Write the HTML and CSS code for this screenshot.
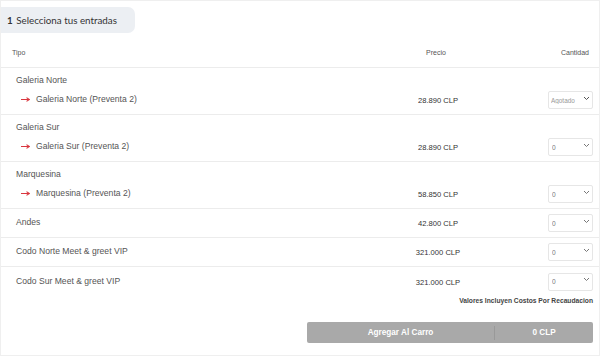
FILE: index.html
```html
<!DOCTYPE html>
<html lang="en">
<head>
    <meta charset="UTF-8">
    <meta name="viewport" content="width=device-width, initial-scale=1.0">
    <title>Selecciona tus entradas</title>
    <link rel="stylesheet" href="styles.css">
</head>
<body>
    <div class="card">
        <div class="step-tab"><span class="step-num">1</span> Selecciona tus entradas</div>

        <!-- Table header -->
        <div class="row head">
            <span class="col-name">Tipo</span>
            <span class="col-price">Precio</span>
            <span class="col-qty">Cantidad</span>
        </div>

        <div class="group">
            <div class="group-title">Galeria Norte</div>
            <div class="row sub">
                <span class="col-name"><svg class="arrow" width="9" height="5" viewBox="0 0 9 5"><path d="M0 2.5H7.5M5.5 0.6L8.4 2.5L5.5 4.4" fill="none" stroke="#d9363e" stroke-width="1.1"/></svg>Galeria Norte (Preventa 2)</span>
                <span class="col-price">28.890 CLP</span>
                <span class="col-qty">
                    <span class="select-wrap">
                        <select class="qty-select muted" disabled><option>Agotado</option></select>
                        <svg class="chev" width="7" height="5" viewBox="0 0 7 5"><path d="M1 1L3.5 3.5L6 1" fill="none" stroke="#555" stroke-width="1"/></svg>
                    </span>
                </span>
            </div>
        </div>

        <div class="group">
            <div class="group-title">Galeria Sur</div>
            <div class="row sub">
                <span class="col-name"><svg class="arrow" width="9" height="5" viewBox="0 0 9 5"><path d="M0 2.5H7.5M5.5 0.6L8.4 2.5L5.5 4.4" fill="none" stroke="#d9363e" stroke-width="1.1"/></svg>Galeria Sur (Preventa 2)</span>
                <span class="col-price">28.890 CLP</span>
                <span class="col-qty">
                    <span class="select-wrap">
                        <select class="qty-select"><option>0</option><option>1</option><option>2</option></select>
                        <svg class="chev" width="7" height="5" viewBox="0 0 7 5"><path d="M1 1L3.5 3.5L6 1" fill="none" stroke="#777" stroke-width="1"/></svg>
                    </span>
                </span>
            </div>
        </div>

        <div class="group">
            <div class="group-title">Marquesina</div>
            <div class="row sub">
                <span class="col-name"><svg class="arrow" width="9" height="5" viewBox="0 0 9 5"><path d="M0 2.5H7.5M5.5 0.6L8.4 2.5L5.5 4.4" fill="none" stroke="#d9363e" stroke-width="1.1"/></svg>Marquesina (Preventa 2)</span>
                <span class="col-price">58.850 CLP</span>
                <span class="col-qty">
                    <span class="select-wrap">
                        <select class="qty-select"><option>0</option><option>1</option><option>2</option></select>
                        <svg class="chev" width="7" height="5" viewBox="0 0 7 5"><path d="M1 1L3.5 3.5L6 1" fill="none" stroke="#777" stroke-width="1"/></svg>
                    </span>
                </span>
            </div>
        </div>

        <div class="row single">
            <span class="col-name">Andes</span>
            <span class="col-price">42.800 CLP</span>
            <span class="col-qty">
                <span class="select-wrap">
                    <select class="qty-select"><option>0</option><option>1</option><option>2</option></select>
                    <svg class="chev" width="7" height="5" viewBox="0 0 7 5"><path d="M1 1L3.5 3.5L6 1" fill="none" stroke="#777" stroke-width="1"/></svg>
                </span>
            </span>
        </div>

        <div class="row single">
            <span class="col-name">Codo Norte Meet &amp; greet VIP</span>
            <span class="col-price">321.000 CLP</span>
            <span class="col-qty">
                <span class="select-wrap">
                    <select class="qty-select"><option>0</option><option>1</option><option>2</option></select>
                    <svg class="chev" width="7" height="5" viewBox="0 0 7 5"><path d="M1 1L3.5 3.5L6 1" fill="none" stroke="#777" stroke-width="1"/></svg>
                </span>
            </span>
        </div>

        <div class="row single last">
            <span class="col-name">Codo Sur Meet &amp; greet VIP</span>
            <span class="col-price">321.000 CLP</span>
            <span class="col-qty">
                <span class="select-wrap">
                    <select class="qty-select"><option>0</option><option>1</option><option>2</option></select>
                    <svg class="chev" width="7" height="5" viewBox="0 0 7 5"><path d="M1 1L3.5 3.5L6 1" fill="none" stroke="#777" stroke-width="1"/></svg>
                </span>
            </span>
        </div>

        <p class="note">Valores Incluyen Costos Por Recaudacion</p>

        <button class="cart-btn" disabled>
            <span class="cart-label">Agregar Al Carro</span>
            <span class="cart-total">0 CLP</span>
        </button>
    </div>
</body>
</html>
```

FILE: styles.css
```css
* {
    box-sizing: border-box;
}
body {
    margin: 0;
    font-family: "Liberation Sans", Arial, sans-serif;
    background: white;
}
.card {
    width: 600px;
    height: 356px;
    border: 1px solid #efefef;
    background: white;
    overflow: hidden;
}
.step-tab {
    display: inline-block;
    margin-top: 6px;
    margin-left: -1px;
    height: 26px;
    line-height: 26px;
    padding: 0 18px 0 7px;
    background: #eceff3;
    border-radius: 0 7px 7px 0;
    font-family: Lato, "Open Sans", sans-serif;
    font-size: 9.8px;
    color: #333;
}
.step-num {
    font-weight: bold;
    margin-right: 1px;
}

/* rows */
.row {
    display: grid;
    grid-template-columns: 1fr 120px 93px;
    align-items: center;
    padding: 0 6px 0 15px;
}
.col-price {
    text-align: center;
    font-size: 7.6px;
    color: #333;
    padding-top: 3px;
    padding-right: 4px;
}
.col-qty {
    display: flex;
    justify-content: flex-end;
}
.col-name {
    font-size: 8.6px;
    color: #555;
    display: flex;
    align-items: center;
}
.head {
    padding-left: 11px;
    padding-right: 10px;
    height: 35px;
    padding-top: 5px;
    border-bottom: 1px solid #ececec;
}
.head span {
    font-size: 7px;
    color: #555;
    padding-top: 0;
}
.head .col-price {
    padding-right: 0;
}
.group {
    border-bottom: 1px solid #ececec;
    padding: 6px 0 4px;
}
.group-title {
    padding-left: 15px;
    font-size: 8.6px;
    line-height: 12px;
    color: #555;
}
.sub {
    margin-top: 2px;
    height: 22px;
}
.sub .col-name {
    padding-left: 5px;
}
.arrow {
    margin-right: 6px;
}
.single {
    height: 29px;
    border-bottom: 1px solid #ececec;
    padding-bottom: 2px;
}
.single.last {
    border-bottom: none;
}

/* quantity select */
.select-wrap {
    position: relative;
    display: inline-block;
}
.qty-select {
    -webkit-appearance: none;
    appearance: none;
    width: 45px;
    height: 18px;
    padding: 0 0 0 3px;
    border: 1px solid #e6e6e6;
    border-radius: 2px;
    background: white;
    font-family: "Liberation Sans", Arial, sans-serif;
    font-size: 6.6px;
    color: #777;
    opacity: 1;
}
.qty-select.muted {
    color: #999;
    padding-left: 2px;
    font-size: 6.4px;
}
.chev {
    position: absolute;
    right: 3px;
    top: 7px;
    pointer-events: none;
}

.note {
    margin: 1px 0 0;
    padding-right: 6px;
    text-align: right;
    font-size: 6.7px;
    font-weight: bold;
    color: #444;
}
.cart-btn {
    display: flex;
    width: 286px;
    height: 21px;
    margin: 18px 0 0 306px;
    padding: 0;
    border: none;
    border-radius: 2px;
    background: #a9a9a9;
    color: white;
    font-family: "Liberation Sans", Arial, sans-serif;
    font-size: 8.2px;
    font-weight: bold;
    align-items: center;
}
.cart-label {
    width: 188px;
    text-align: center;
    border-right: 1px solid #999;
    line-height: 14px;
}
.cart-total {
    flex: 1;
    text-align: center;
}
```
